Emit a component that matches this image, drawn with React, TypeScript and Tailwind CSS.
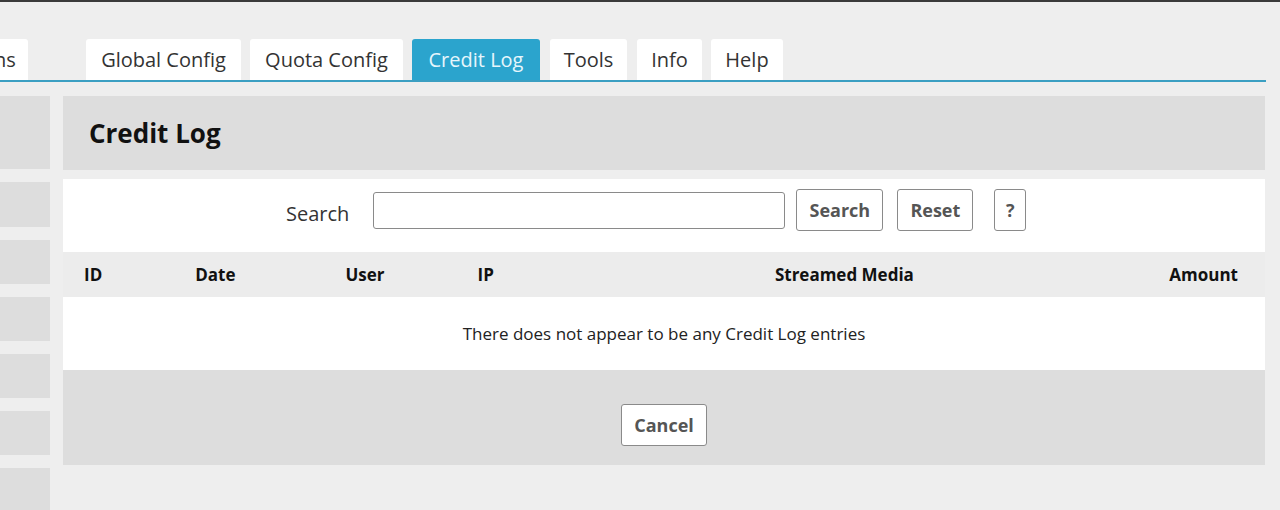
const tabs = [
  { label: "Global Config", w: "w-[155px]" },
  { label: "Quota Config", w: "w-[153px] ml-[9px]" },
  { label: "Credit Log", w: "w-[128px] ml-[9px]", active: true },
  { label: "Tools", w: "w-[77px] ml-[10px]" },
  { label: "Info", w: "w-[65px] ml-[10px]" },
  { label: "Help", w: "w-[72px] ml-[9px]" },
];

function Btn({ label, className }: { label: string; className?: string }) {
  return (
    <button
      className={`h-[42px] border border-[#8a8a8a] rounded-[3px] bg-white text-[#555] font-bold text-[18px] ${className ?? ""}`}
    >
      {label}
    </button>
  );
}

export default function App() {
  const sideBlocks = ["h-[73px]", "h-[45px]", "h-[44px]", "h-[44px]", "h-[44px]", "h-[44px]", "h-[44px]"];

  return (
    <div
      className="w-[1280px] h-[510px] overflow-hidden bg-[#eeeeee] text-[#222]"
      style={{ fontFamily: '"Open Sans", sans-serif' }}
    >
      <div className="h-[2px] bg-[#3a3a3a]" />

      {/* tabs */}
      <div className="pt-[37px] w-[1266px] border-b-2 border-[#3b9fc2]">
        <div className="flex items-end">
          <div className="h-[41px] w-[28px] bg-white rounded-tr-[3px] flex items-center text-[20px] text-[#333] overflow-hidden">
            <span className="-ml-[6px]">ns</span>
          </div>
          <div className="flex ml-[58px]">
            {tabs.map((t) => (
              <div
                key={t.label}
                className={`${t.w} h-[41px] flex items-center justify-center rounded-t-[3px] text-[20px] ${
                  t.active ? "bg-[#2ba4cd] text-[#e6f6fc]" : "bg-white text-[#333]"
                }`}
              >
                {t.label}
              </div>
            ))}
          </div>
        </div>
      </div>

      <div className="flex gap-[13px] pt-[14px]">
        {/* sidebar */}
        <div className="w-[50px] flex flex-col gap-[13px]">
          {sideBlocks.map((h, i) => (
            <div key={i} className={`${h} bg-[#dddddd]`} />
          ))}
        </div>

        {/* main */}
        <div className="w-[1202px] flex flex-col">
          <div className="h-[74px] bg-[#dddddd] flex items-center pl-[26px]">
            <h1 className="text-[26px] font-bold text-[#111]">Credit Log</h1>
          </div>

          <div className="h-[9px]" />

          <div className="h-[73px] bg-white flex items-start pt-[10px]">
            <span className="ml-[223px] mt-[10px] text-[20px] text-[#333]">Search</span>
            <input
              type="text"
              className="ml-[24px] mt-[3px] w-[412px] h-[37px] border border-[#8a8a8a] rounded-[3px] bg-white"
            />
            <Btn label="Search" className="ml-[11px] w-[87px]" />
            <Btn label="Reset" className="ml-[14px] w-[76px]" />
            <Btn label="?" className="ml-[21px] w-[32px]" />
          </div>

          <div className="h-[45px] bg-[#ececec] flex items-center text-[17px] font-bold text-[#111]">
            <span className="ml-[21px]">ID</span>
            <span className="ml-[93px]">Date</span>
            <span className="ml-[110px]">User</span>
            <span className="ml-[93px]">IP</span>
            <span className="ml-[281px]">Streamed Media</span>
            <span className="ml-auto mr-[27px]">Amount</span>
          </div>

          <div className="h-[73px] bg-white flex items-center justify-center text-[17px] text-[#222]">
            There does not appear to be any Credit Log entries
          </div>

          <div className="h-[95px] bg-[#dddddd] flex items-start justify-center pt-[34px]">
            <Btn label="Cancel" className="w-[86px]" />
          </div>
        </div>
      </div>
    </div>
  );
}
